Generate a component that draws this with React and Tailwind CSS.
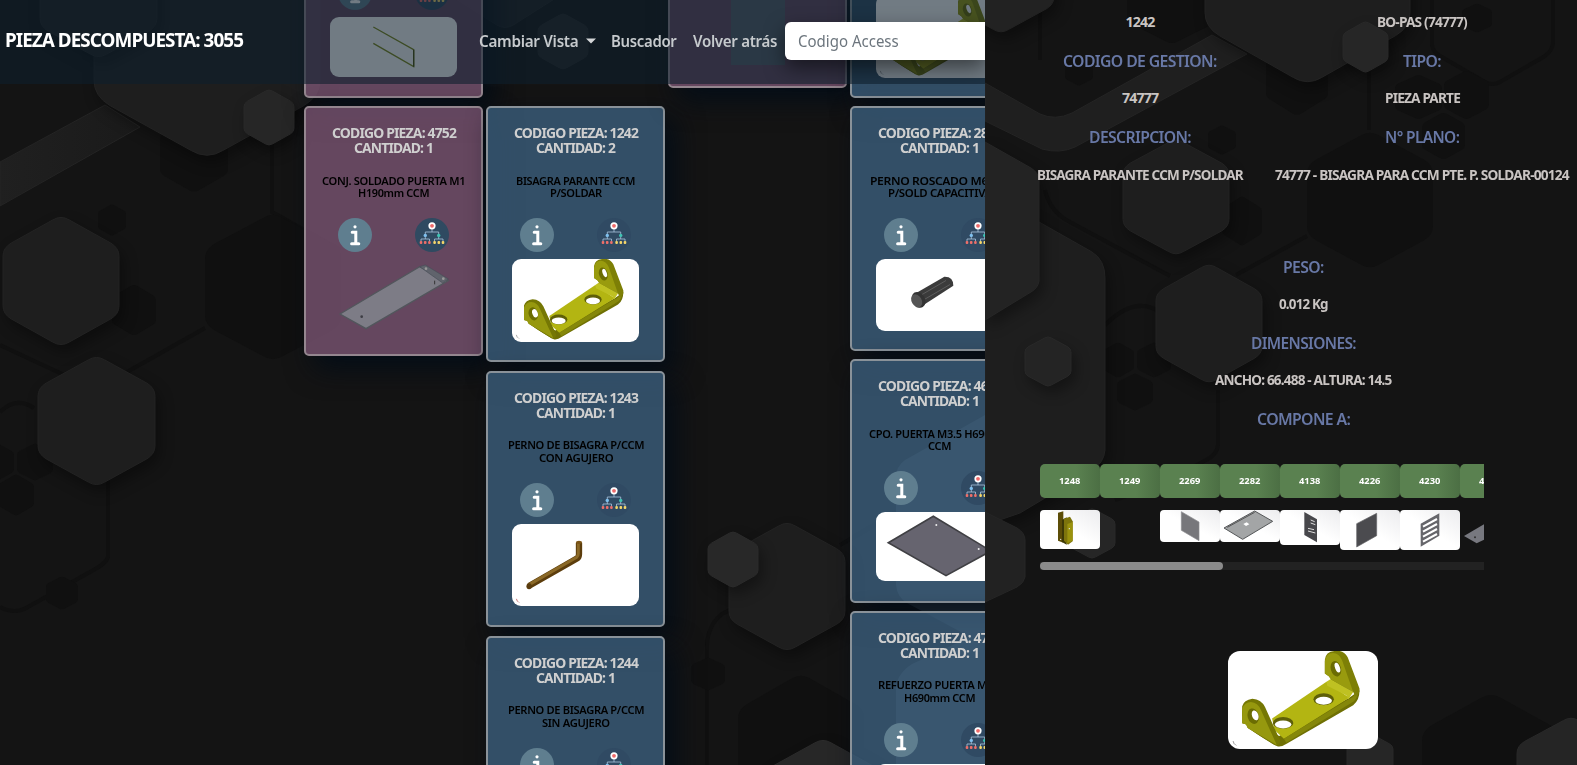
import { useLayoutEffect, useRef, useState } from "react";

/* Text condensed horizontally so that it takes exactly `w` pixels. */
function Fit({ w, children, className = "" }) {
  const ref = useRef(null);
  const [k, setK] = useState(1);
  useLayoutEffect(() => {
    const measure = () => ref.current && setK(w / ref.current.offsetWidth);
    measure();
    document.fonts.ready.then(measure);
  }, [w]);
  return (
    <div className={`shrink-0 whitespace-nowrap ${className}`} style={{ width: w }}>
      <span ref={ref} className="inline-block origin-left" style={{ transform: `scaleX(${k})` }}>
        {children}
      </span>
    </div>
  );
}

/* Pointed-top hexagon with rounded corners, from its bounding box. */
function Hex({ x, y, w, h, fill = "#1e1e1e", stroke = "#232323", shadow }) {
  const q = h / 4;
  const r = Math.min(w, h) * 0.07;
  const d = `M${x + w / 2 - r} ${y + r * 0.6} Q${x + w / 2} ${y} ${x + w / 2 + r} ${y + r * 0.6} L${x + w - r} ${y + q - r * 0.6} Q${x + w} ${y + q} ${x + w} ${y + q + r} V${y + 3 * q - r} Q${x + w} ${y + 3 * q} ${x + w - r} ${y + 3 * q + r * 0.6} L${x + w / 2 + r} ${y + h - r * 0.6} Q${x + w / 2} ${y + h} ${x + w / 2 - r} ${y + h - r * 0.6} L${x + r} ${y + 3 * q + r * 0.6} Q${x} ${y + 3 * q} ${x} ${y + 3 * q - r} V${y + q + r} Q${x} ${y + q} ${x + r} ${y + q - r * 0.6} Z`;
  return <path d={d} fill={fill} stroke={stroke} filter={shadow ? "url(#soft)" : undefined} />;
}

const dark = { fill: "#101010", stroke: "none" };

function BoardBackdrop() {
  return (
    <svg className="absolute inset-0" width="985" height="765" viewBox="0 0 985 765">
      <defs>
        <filter id="soft" x="-30%" y="-30%" width="170%" height="170%" colorInterpolationFilters="sRGB">
          <feDropShadow dx="4" dy="7" stdDeviation="7" floodColor="#000" floodOpacity="0.35" />
        </filter>
        <linearGradient id="band" x1="0" x2="1"><stop offset="0" stopColor="#202020" /><stop offset="1" stopColor="#1a1a1a" /></linearGradient>
      </defs>
      <g fill="none" stroke="#101010" strokeWidth="4">
        <path d="M272 140V212L340 250M0 345L62 374L97 400M205 328L127 372M0 412Q16 396 34 408M108 480V557Q106 563 97 568L28 607Q15 615 0 607M707 765V645Q708 625 722 614L745 602M840 545L900 510" />
      </g>
      <Hex x={160} y={115} w={68} h={78} {...dark} />
      <Hex x={205} y={212} w={136} h={150} {...dark} />
      <Hex x={98} y={204} w={28} h={32} {...dark} />
      <Hex x={112} y={284} w={44} h={52} {...dark} />
      <Hex x={-20} y={443} w={34} h={38} {...dark} />
      <Hex x={17} y={443} w={36} h={38} {...dark} />
      <Hex x={-2} y={474} w={36} h={42} {...dark} />
      <Hex x={46} y={576} w={32} h={34} {...dark} />
      <Hex x={691} y={657} w={34} h={34} {...dark} />
      <Hex x={738} y={673} w={126} h={146} {...dark} />
      <path d="M0 162L105 105L140 127L0 206Z" fill="url(#band)" stroke="#242424" />
      <Hex x={94} y={-96} w={226} h={256} shadow />
      <Hex x={40} y={-72} w={117} h={131} shadow />
      <Hex x={244} y={89} w={50} h={57} fill="#262626" stroke="#292929" shadow />
      <Hex x={3} y={215} w={116} h={132} shadow />
      <Hex x={38} y={355} w={117} h={132} shadow />
      <Hex x={445} y={-120} w={120} h={150} />
      <Hex x={538} y={13} w={50} h={57} fill="#222" stroke="#252525" />
      <Hex x={729} y={521} w={116} h={131} shadow />
      <Hex x={708} y={531} w={50} h={57} fill="#282828" stroke="#2b2b2b" shadow />
      <Hex x={765} y={738} w={116} h={131} fill="#272727" stroke="#2b2b2b" shadow />
      <path d="M985 415L905 460Q896 466 896 478V585Q897 597 907 603L985 645Z" fill="#33393d" />
      <path d="M985 630L912 664Q896 674 896 690V765H985Z" fill="#33393d" />
    </svg>
  );
}

function PanelBackdrop() {
  return (
    <svg className="absolute inset-0" width="592" height="765" viewBox="985 0 592 765">
      <g fill="none" stroke="#101010" strokeWidth="4">
        <path d="M1369 40V130M1040 0V60M1432 0V45Q1433 52 1440 56L1485 82Q1492 86 1500 82L1545 56Q1553 50 1553 42V0M1045 190Q1050 212 1070 222L1170 276M1307 236L1236 275M1105 325Q1135 295 1160 312M1218 390V445Q1217 454 1208 459L1165 482L1115 500" />
      </g>
      <Hex x={1266} y={40} w={62} h={76} {...dark} />
      <Hex x={1307} y={130} w={126} h={140} {...dark} />
      <Hex x={1395} y={74} w={47} h={46} {...dark} />
      <Hex x={1444} y={70} w={45} h={50} {...dark} />
      <Hex x={1422} y={112} w={43} h={48} {...dark} />
      <Hex x={1208} y={125} w={28} h={30} {...dark} />
      <Hex x={1065} y={56} w={28} h={30} {...dark} />
      <Hex x={1462} y={3} w={30} h={30} {...dark} />
      <Hex x={1222} y={196} w={40} h={50} {...dark} />
      <Hex x={1102} y={342} w={32} h={36} {...dark} />
      <Hex x={1137} y={342} w={34} h={36} {...dark} />
      <Hex x={1117} y={373} w={36} h={38} {...dark} />
      <Hex x={1127} y={-50} w={90} h={95} {...dark} />
      <Hex x={1422} y={692} w={138} h={156} {...dark} />
      <path d="M985 83L1040 114Q1055 121 1072 113L1212 35L1247 54L1075 147Q1060 154 1042 149L985 121Z" fill="#1f1f1f" stroke="#242424" />
      <Hex x={1205} y={-150} w={205} h={236} shadow />
      <Hex x={948} y={-85} w={106} h={119} fill="#222" shadow />
      <Hex x={1343} y={21} w={45} h={52} fill="#262626" stroke="#292929" shadow />
      <path d="M985 190L1039 222L1092 252Q1105 260 1105 278V450Q1104 463 1092 470L1020 513L985 525Z" fill="#1e1e1e" stroke="#232323" filter="url(#soft)" />
      <path d="M985 142L1031 168Q1039 173 1039 181V281Q1038 288 1031 292L985 320Z" fill="#232323" stroke="#272727" filter="url(#soft)" />
      <Hex x={1123} y={138} w={106} h={118} shadow />
      <Hex x={1156} y={263} w={106} h={121} shadow />
      <Hex x={1025} y={336} w={46} h={51} fill="#242424" stroke="#292929" shadow />
      <path d="M985 512L1017 528Q1025 533 1025 540V577Q1024 583 1017 587L985 602Z" fill="#222" stroke="#262626" />
      <Hex x={1069} y={508} w={46} h={51} fill="#262626" stroke="#292929" />
      <Hex x={1347} y={733} w={46} h={52} fill="#262626" stroke="#292929" />
      <Hex x={1517} y={716} w={108} h={120} fill="#252525" stroke="#292929" />
    </svg>
  );
}

function Bracket() {
  return (
    <svg className="h-full w-full" viewBox="0 0 381 248" preserveAspectRatio="none">
      <path d="M36 165V148L50 190Q60 205 125 241Q135 244 150 234L318 137Q334 125 334 100L308 118L130 215L60 175Z" fill="#6f7004" />
      <path d="M112 171L250 78L308 118L142 222L118 200Z" fill="#b3b512" />
      <path d="M250 78L262 70L318 104L306 122L300 112L252 88Z" fill="#bfc122" />
      <path d="M142 222L306 122Q322 118 328 98Q334 112 320 127L148 232Z" fill="#85870a" />
      <path d="M246 57V22Q248 2 270 0H284Q296 2 304 16L334 95Q336 108 324 116L318 104L262 72L256 64Z" fill="#7d7f06" />
      <path d="M246 57V26Q250 5 266 5Q283 6 290 24L318 104L262 72L256 64Z" fill="#999b0e" />
      <ellipse cx="274" cy="45" rx="13" ry="20" fill="#6b6c02" transform="rotate(-15 274 45)" />
      <ellipse cx="278" cy="42" rx="6" ry="13" fill="#fff" transform="rotate(-20 278 42)" />
      <path d="M36 183V140Q40 124 62 121Q84 122 94 142L133 228Q130 242 118 238L50 195Q48 190 46 186Z" fill="#757704" />
      <path d="M36 183V146Q42 129 58 129Q76 130 84 150L124 238L50 195Q48 190 46 186Z" fill="#96980e" />
      <ellipse cx="64" cy="165" rx="14" ry="20" fill="#6b6c02" transform="rotate(-15 64 165)" />
      <ellipse cx="69" cy="163" rx="8" ry="13" fill="#fff" transform="rotate(-20 69 163)" />
      <ellipse cx="243" cy="122" rx="26" ry="15" fill="#5e5f08" />
      <ellipse cx="243" cy="126" rx="21" ry="10" fill="#fff" />
      <ellipse cx="140" cy="182" rx="26" ry="15" fill="#5e5f08" />
      <ellipse cx="140" cy="186" rx="21" ry="10" fill="#fff" />
      <path d="M13 228l3 8m2 0l3 3" stroke="#555" strokeWidth="1.5" />
    </svg>
  );
}

function Part({ kind }) {
  if (kind === "bracket") return <Bracket />;
  if (kind === "rod")
    return (
      <svg className="h-full w-full" viewBox="0 0 381 248">
        <path d="M51 186L196 103Q201 99 201 90V56" fill="none" stroke="#5c3d0c" strokeWidth="19" strokeLinejoin="round" />
        <path d="M50 183L194 100Q199 96 199 88V56" fill="none" stroke="#8a6826" strokeWidth="9" />
        <ellipse cx="201" cy="55" rx="9" ry="5" fill="#7a5416" />
        <ellipse cx="51" cy="187" rx="8" ry="9" fill="#5a3c0e" />
        <path d="M13 225l3 8m2 0l3 3" stroke="#a33" strokeWidth="2" />
      </svg>
    );
  if (kind === "bolt")
    return (
      <svg className="h-full w-full" viewBox="0 0 381 215">
        <path d="M118 103L205 53Q232 52 232 80L145 136Z" fill="#3b3b3b" />
        <path d="M128 112L210 64M138 125L222 76" stroke="#5d5d5d" strokeWidth="3" />
        <ellipse cx="128" cy="122" rx="19" ry="25" fill="#333" transform="rotate(-30 128 122)" />
        <ellipse cx="122" cy="125" rx="15" ry="21" fill="#555" transform="rotate(-30 122 125)" />
      </svg>
    );
  if (kind === "sheet")
    return (
      <svg className="h-full w-full" viewBox="0 0 381 207">
        <path d="M37 92L172 13L345 117L210 191Z" fill="#66646f" stroke="#404044" strokeWidth="5" />
        <circle cx="181" cy="39" r="3" fill="#eee" /><circle cx="308" cy="111" r="3" fill="#eee" />
      </svg>
    );
  if (kind === "door")
    return (
      <svg className="h-full w-full" viewBox="0 0 381 216">
        <path d="M30 165L269 23L355 65L108 209Z" fill="#7d7c86" stroke="#52565c" strokeWidth="4" />
        <path d="M269 23L286 18L355 60L338 72Z" fill="#60636c" stroke="#494f58" strokeWidth="2" />
        <circle cx="288" cy="29" r="4" fill="#999" /><circle cx="340" cy="59" r="4" fill="#999" />
        <circle cx="95" cy="173" r="4" fill="#3d3d44" /><path d="M314 65v11" stroke="#333" strokeWidth="3" />
      </svg>
    );
  if (kind === "wire")
    return (
      <svg className="h-full w-full" viewBox="0 0 381 180">
        <path d="M130 30L251 98V149L130 79" fill="none" stroke="#7f8c1c" strokeWidth="4" />
        <path d="M251 98V149" stroke="#4a5210" strokeWidth="4" />
      </svg>
    );
  return null;
}

function InfoIcon() {
  return (
    <svg width="34" height="34" viewBox="0 0 34 34">
      <circle cx="17" cy="17" r="17" fill="#5f7e8f" />
      <circle cx="17" cy="8.8" r="1.6" fill="#fff" />
      <path d="M14.2 14.2H17.8V25.5M13.6 25.8H20.8" fill="none" stroke="#fff" strokeWidth="3" strokeLinecap="round" />
    </svg>
  );
}

function TreeIcon({ bg }) {
  return (
    <svg width="34" height="34" viewBox="0 0 34 34">
      <circle cx="17" cy="17" r="17" fill={bg} />
      <path d="M17 10V14M10.3 17V14H23.7V17M10.3 17V21M23.7 17V21M6 23V21H14.5V23M19.5 23V21H28V23" fill="none" stroke="#a9c4dd" strokeWidth="0.8" />
      <circle cx="17" cy="7.8" r="3.6" fill="#fff" /><circle cx="17" cy="7.8" r="1.9" fill="#ee6a6a" />
      <circle cx="10.3" cy="17.4" r="1.7" fill="#7fc0ee" /><circle cx="23.7" cy="17.4" r="1.7" fill="#3fc4b4" />
      {[6, 10.2, 14.4].map((x) => <rect key={x} x={x - 1.3} y="22.9" width="2.6" height="3" rx="1" fill="#ec6f6a" />)}
      {[19.6, 23.8, 28].map((x) => <rect key={x} x={x - 1.3} y="22.9" width="2.6" height="3" rx="1" fill="#f3d56a" />)}
    </svg>
  );
}

function Card({ code, qty = 1, lines = [], kind, color = "blue", height, imgHeight }) {
  const purple = color === "purple";
  const white = kind !== "door" && kind !== "none";
  return (
    <article
      className={`flex w-[179px] shrink-0 flex-col items-center rounded-[5px] border-2 pt-[17px] shadow-[10px_12px_28px_rgba(1,12,24,0.85)] ${purple ? "border-[#94868f] bg-[rgba(121,84,114,0.8)]" : "border-[#8a9299] bg-[rgba(59,94,124,0.8)]"}`}
      style={{ height }}
    >
      <div className="flex h-[30px] flex-col items-center text-[14.4px] leading-[15px] font-bold tracking-[-0.06em] text-[#cfcfcf]">
        <Fit w={124}>CODIGO PIEZA: {code}</Fit>
        <Fit w={79}>CANTIDAD: {qty}</Fit>
      </div>
      <div className="mt-[19.5px] flex h-[26px] flex-col items-center text-[11.5px] leading-[12.6px] font-semibold tracking-[-0.03em] text-black">
        {lines.map(([t, w]) => <Fit key={t} w={w}>{t}</Fit>)}
      </div>
      <div className="mt-[17.5px] flex h-[34px] gap-[43px]">
        <InfoIcon />
        <TreeIcon bg={purple ? "#2f4a61" : "#304a63"} />
      </div>
      <div
        className={`mt-[7px] w-[127px] shrink-0 overflow-hidden rounded-[9px] ${white ? "bg-white" : ""}`}
        style={{ height: imgHeight }}
      >
        <Part kind={kind} />
        {kind === "none" && <div className="mx-auto h-full w-[54px] bg-[#535c68]" />}
      </div>
    </article>
  );
}

function Thumb({ id, h, children }) {
  return (
    <div className="flex w-[60px] shrink-0 flex-col">
      <div className="flex h-[34px] items-center justify-center rounded-[5px] bg-linear-to-r from-[#5a8150] from-60% to-[#4c6f44] text-[9.6px] font-bold text-white">
        <Fit w={21.5}>{id}</Fit>
      </div>
      <div
        className={`mt-[12px] overflow-hidden rounded-[4px] ${h && id !== "4231" ? "bg-linear-to-bl from-[#ececee] to-white to-50%" : ""}`}
        style={{ height: h }}
      >
        <svg width="60" height={h} viewBox={`0 0 180 ${h * 3}`}>{children}</svg>
      </div>
    </div>
  );
}

const Label = ({ w, children }) => (
  <div className="flex h-9 items-center text-[16.5px] font-semibold tracking-[-0.04em] text-[#6878a6]"><Fit w={w}>{children}</Fit></div>
);
const Value = ({ w, children }) => (
  <div className="mb-[3.3px] flex h-[37px] items-center text-[14.2px] font-bold tracking-[-0.06em] text-[#c9c4c2]"><Fit w={w}>{children}</Fit></div>
);

export default function App() {
  return (
    <div className="flex h-[765px] w-[1577px] overflow-hidden bg-[#141414] font-['Noto_Sans','Open_Sans',sans-serif]">
      <main className="relative w-[985px] shrink-0 overflow-hidden">
        <BoardBackdrop />
        <div className="relative flex h-[765px] items-start gap-[3px] pl-[304px]">
          <div className="-mt-[136px] flex flex-col gap-[8px]">
            <Card code="4751" kind="wire" color="purple" height={234} imgHeight={60} />
            <Card code="4752" kind="door" color="purple" height={250} imgHeight={72} lines={[["CONJ. SOLDADO PUERTA M1", 143], ["H190mm CCM", 71]]} />
          </div>
          <div className="mt-[106px] flex flex-col gap-[8.5px]">
            <Card code="1242" qty={2} kind="bracket" height={256} imgHeight={82.5} lines={[["BISAGRA PARANTE CCM", 119], ["P/SOLDAR", 52]]} />
            <Card code="1243" kind="rod" height={256.5} imgHeight={82.5} lines={[["PERNO DE BISAGRA P/CCM", 136], ["CON AGUJERO", 74]]} />
            <Card code="1244" kind="rod" height={256} imgHeight={82.5} lines={[["PERNO DE BISAGRA P/CCM", 136], ["SIN AGUJERO", 68]]} />
          </div>
          <div className="-mt-[160px] flex flex-col">
            <Card code="4753" kind="none" color="purple" height={248} imgHeight={72} />
          </div>
          <div className="-mt-[158px] flex flex-col gap-[8px]">
            <Card code="1242" kind="bracket" height={256} imgHeight={82.5} />
            <Card code="2853" kind="bolt" height={245} imgHeight={72} lines={[["PERNO ROSCADO M6X20", 139], ["P/SOLD CAPACITIVA", 104]]} />
            <Card code="4680" kind="sheet" height={243.5} imgHeight={69} lines={[["CPO. PUERTA M3.5 H690mm", 142], ["CCM", 23]]} />
            <Card code="4750" kind="sheet" height={243} imgHeight={69} lines={[["REFUERZO PUERTA M3.5", 124], ["H690mm CCM", 71]]} />
          </div>
        </div>
        <header className="absolute inset-x-0 top-0 flex h-[84px] items-center bg-[rgba(13,30,45,0.59)] pl-[5px] font-medium text-[#c6cacd]">
          <Fit w={238} className="pb-[5px] text-[19.5px] font-bold tracking-[-0.05em] text-white">PIEZA DESCOMPUESTA: 3055</Fit>
          <nav className="ml-[236px] flex items-center pb-[2px] text-[16.5px] font-semibold tracking-[-0.02em]">
            <Fit w={99}>Cambiar Vista</Fit>
            <svg className="ml-[8px]" width="10" height="6" viewBox="0 0 10 6"><path d="M0 0.5H10L5 5.5Z" fill="#d4d6d8" /></svg>
            <Fit w={66} className="ml-[15px]">Buscador</Fit>
            <Fit w={84} className="ml-[16px]">Volver atrás</Fit>
          </nav>
          <div className="mb-[2px] ml-[8px] flex h-[38px] w-[200px] shrink-0 items-center rounded-l-[6px] bg-white pl-[13px] text-[16.5px] font-normal text-[#6c757d] shadow-[0_8px_20px_rgba(0,0,0,0.5)]">
            <Fit w={101}>Codigo Access</Fit>
          </div>
        </header>
      </main>

      <aside className="relative h-[765px] w-[592px] shrink-0 overflow-hidden bg-[#141414]">
        <PanelBackdrop />
        <div className="relative flex flex-col">
          <div className="grid h-[248.5px] grid-cols-[254px_310px] content-start pt-[3.2px] pl-[28px]">
            <div className="flex flex-col items-center">
              <Value w={29}>1242</Value>
              <Label w={154}>CODIGO DE GESTION:</Label>
              <Value w={36}>74777</Value>
              <Label w={102}>DESCRIPCION:</Label>
              <Value w={206}>BISAGRA PARANTE CCM P/SOLDAR</Value>
            </div>
            <div className="flex flex-col items-center">
              <Value w={90}>BO-PAS (74777)</Value>
              <Label w={38}>TIPO:</Label>
              <Value w={75}>PIEZA PARTE</Value>
              <Label w={74}>N° PLANO:</Label>
              <Value w={294}>74777 - BISAGRA PARA CCM PTE. P. SOLDAR-00124</Value>
            </div>
          </div>
          <div className="flex h-[215.5px] flex-col items-center pt-[0.5px] pl-[44px]">
            <Label w={41}>PESO:</Label>
            <Value w={49}>0.012 Kg</Value>
            <Label w={105}>DIMENSIONES:</Label>
            <Value w={176}>ANCHO: 66.488 - ALTURA: 14.5</Value>
            <Label w={93}>COMPONE A:</Label>
          </div>
          <div className="ml-[55px] flex h-[98px] w-[444px] items-start overflow-hidden">
            <Thumb id="1248" h={39}>
              <path d="M54 8L70 4V98L54 92Z" fill="#5c4d08" /><path d="M66 30L80 22V104L66 96Z" fill="#3e3906" />
              <path d="M72 26L90 20L98 34V94L84 104L72 92Z" fill="#7d740c" /><path d="M82 42L98 36V92L82 100Z" fill="#9a920e" />
              <circle cx="88" cy="56" r="2" fill="#eee" /><circle cx="62" cy="88" r="2" fill="#eee" />
            </Thumb>
            <Thumb id="1249" h={0} />
            <Thumb id="2269" h={32}><path d="M64 5L117 36V92L64 61Z" fill="#77777b" stroke="#8d8d90" strokeWidth="2" /></Thumb>
            <Thumb id="2282" h={32}>
              <path d="M12 54L104 3L158 34L68 88Z" fill="#a3a5a6" stroke="#545658" strokeWidth="3" /><path d="M22 52L104 7" stroke="#555" strokeWidth="3" /><path d="M70 42L80 37L88 43L78 48Z" fill="#fff" />
            </Thumb>
            <Thumb id="4138" h={35}>
              <path d="M73 6L111 28V97L73 75Z" fill="#47474b" /><path d="M92 30l12 5M92 39l14 5M84 55l18 4M84 63l22 6" stroke="#ddd" strokeWidth="3" />
            </Thumb>
            <Thumb id="4226" h={40}><path d="M50 41L110 10V77L50 111Z" fill="#4b4b4f" stroke="#67676a" strokeWidth="2" /></Thumb>
            <Thumb id="4230" h={40}>
              <path d="M62 41L118 10V77L62 110Z" fill="#66666b" /><path d="M69 50L111 27M69 65L111 42M69 80L111 57M69 95L111 72" stroke="#fff" strokeWidth="6" />
            </Thumb>
            <Thumb id="4231" h={40}><path d="M12 78L80 38L130 60L50 100Z" fill="#77787f" /><circle cx="45" cy="82" r="3" fill="#333" /></Thumb>
          </div>
          <div className="ml-[55px] h-[8px] w-[444px] bg-[#222]">
            <div className="h-full w-[183px] rounded-full bg-[#8b8b8b]" />
          </div>
          <div className="mt-[81px] ml-[243px] h-[98px] w-[150px] overflow-hidden rounded-[12px] bg-white">
            <Bracket />
          </div>
        </div>
      </aside>
    </div>
  );
}
